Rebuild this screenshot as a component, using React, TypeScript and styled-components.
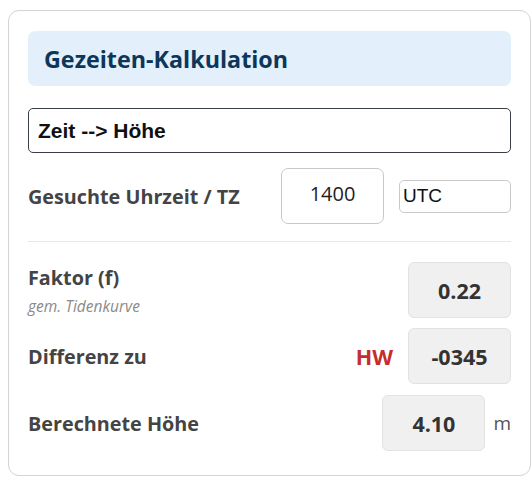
import React from "react";
import styled, { createGlobalStyle } from "styled-components";

const Global = createGlobalStyle`
  html, body { margin: 0; padding: 0; background: #fff; }
  body { font-family: "Open Sans", "Noto Sans", sans-serif; }
  #root { padding: 10px 1px 5px 8px; }
`;

const Card = styled.div`
  width: 523px;
  box-sizing: border-box;
  border: 1px solid #d4d4d4;
  border-radius: 11px;
  padding: 20px 19px 24px 19px;
  background: #fff;
`;

const Header = styled.div`
  height: 55px;
  box-sizing: border-box;
  background: #e3f0fb;
  border-radius: 7px;
  display: flex;
  align-items: center;
  padding-left: 16px;
`;

const Title = styled.h2`
  margin: 0;
  font-family: "Open Sans", sans-serif;
  font-weight: 700;
  font-size: 23.3px;
  color: #0c375a;
`;

const ModeSelect = styled.div`
  margin-top: 22px;
  height: 45px;
  box-sizing: border-box;
  border: 1px solid #3a3f45;
  border-radius: 5px;
  display: flex;
  align-items: center;
  padding-left: 9px;
  font-family: "Liberation Sans", Arial, sans-serif;
  font-weight: 700;
  font-size: 21px;
  color: #111;
`;

const Row = styled.div<{ $mt?: number }>`
  display: flex;
  align-items: center;
  justify-content: space-between;
  margin-top: ${(p) => p.$mt ?? 0}px;
`;

const Label = styled.div`
  font-family: "Open Sans", sans-serif;
  font-weight: 700;
  font-size: 19.8px;
  color: #444;
`;

const LabelStack = styled.div`
  display: flex;
  flex-direction: column;
  gap: 4px;
`;

const Sub = styled.div`
  font-family: "Open Sans", sans-serif;
  font-style: italic;
  font-size: 15.5px;
  color: #8a8a8a;
`;

const Controls = styled.div<{ $gap?: number }>`
  display: flex;
  align-items: center;
  gap: ${(p) => p.$gap ?? 15}px;
`;

const TimeInput = styled.div`
  width: 103px;
  height: 56px;
  box-sizing: border-box;
  border: 1px solid #c9c9c9;
  border-radius: 7px;
  display: flex;
  align-items: center;
  justify-content: center;
  padding-bottom: 5px;
  font-family: "Open Sans", sans-serif;
  font-size: 20px;
  color: #222;
`;

const ZoneInput = styled.div`
  width: 112px;
  height: 33px;
  box-sizing: border-box;
  border: 1px solid #c9c9c9;
  border-radius: 5px;
  display: flex;
  align-items: center;
  padding-left: 3px;
  font-family: "Liberation Sans", Arial, sans-serif;
  font-size: 19px;
  color: #111;
`;

const Divider = styled.hr`
  border: none;
  border-top: 1px solid #e8e8e8;
  margin: 17px 0 20px 0;
`;

const ValueBox = styled.div`
  width: 103px;
  height: 56px;
  box-sizing: border-box;
  background: #f0f0f0;
  border: 1px solid #e2e2e2;
  border-radius: 6px;
  display: flex;
  align-items: center;
  justify-content: center;
  font-family: "Open Sans", sans-serif;
  font-weight: 700;
  font-size: 21.5px;
  color: #333;
`;

const Ref = styled.span`
  font-family: "Open Sans", sans-serif;
  font-weight: 700;
  font-size: 21.5px;
  color: #c62d2d;
`;

const Unit = styled.span`
  font-family: "Open Sans", sans-serif;
  font-size: 19px;
  color: #555;
`;

export default function App() {
  return (
    <>
      <Global />
      <Card>
        <Header>
          <Title>Gezeiten-Kalkulation</Title>
        </Header>
        <ModeSelect>Zeit --&gt; Höhe</ModeSelect>
        <Row $mt={15}>
          <Label>Gesuchte Uhrzeit / TZ</Label>
          <Controls>
            <TimeInput>1400</TimeInput>
            <ZoneInput>UTC</ZoneInput>
          </Controls>
        </Row>
        <Divider />
        <Row>
          <LabelStack>
            <Label>Faktor (f)</Label>
            <Sub>gem. Tidenkurve</Sub>
          </LabelStack>
          <ValueBox>0.22</ValueBox>
        </Row>
        <Row $mt={10}>
          <Label>Differenz zu</Label>
          <Controls>
            <Ref>HW</Ref>
            <ValueBox>-0345</ValueBox>
          </Controls>
        </Row>
        <Row $mt={11}>
          <Label>Berechnete Höhe</Label>
          <Controls $gap={8}>
            <ValueBox>4.10</ValueBox>
            <Unit>m</Unit>
          </Controls>
        </Row>
      </Card>
    </>
  );
}
